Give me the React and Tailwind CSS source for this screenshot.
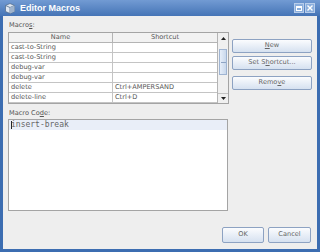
import React from "react";

const rows = [
  ["cast-to-String", ""],
  ["cast-to-String", ""],
  ["debug-var", ""],
  ["debug-var", ""],
  ["delete", "Ctrl+AMPERSAND"],
  ["delete-line", "Ctrl+D"],
];

function Btn({ children, className = "" }) {
  return (
    <div
      className={
        "flex items-center justify-center border border-[#8da2c2] rounded-[2px] bg-gradient-to-b from-[#fbfcfe] to-[#d6e1f0] text-[#666] " +
        className
      }
    >
      {children}
    </div>
  );
}

function TitleIcon() {
  return (
    <svg width="10" height="11" viewBox="0 0 10 11">
      <path d="M5 0.5 L9.5 2.5 L9.5 8.5 L5 10.5 L0.5 8.5 L0.5 2.5 Z" fill="#dfe7f2" stroke="#56708f" strokeWidth="0.8" />
      <path d="M0.5 2.5 L5 4.5 L9.5 2.5 M5 4.5 L5 10.5" fill="none" stroke="#56708f" strokeWidth="0.8" />
      <path d="M5 4.5 L9.5 2.5 L9.5 8.5 L5 10.5 Z" fill="#9fb3cc" />
    </svg>
  );
}

export default function App() {
  return (
    <div
      className="w-[320px] h-[252px] flex flex-col bg-[#3c6db1] overflow-hidden"
      style={{ fontFamily: "'DejaVu Sans', sans-serif" }}
    >
      {/* title bar */}
      <div className="h-[16px] flex items-center px-[5px] bg-gradient-to-b from-[#729bd3] to-[#4574b6]">
        <TitleIcon />
        <span
          className="ml-[5px] text-[9px] font-bold text-white leading-none"
          style={{ fontFamily: "'Liberation Sans', sans-serif" }}
        >
          Editor Macros
        </span>
        <div className="ml-auto flex gap-[1px]">
          <div className="w-[10px] h-[10px] bg-[#8aaedd] border border-[#b8cdea] flex items-center justify-center">
            <div className="w-[6px] h-[5px] border border-white border-t-2" />
          </div>
          <div className="w-[10px] h-[10px] bg-[#8aaedd] border border-[#b8cdea] flex items-center justify-center">
            <svg width="6" height="6" viewBox="0 0 6 6">
              <path d="M0.5 0.5 L5.5 5.5 M5.5 0.5 L0.5 5.5" stroke="white" strokeWidth="1.4" />
            </svg>
          </div>
        </div>
      </div>

      {/* body */}
      <div className="flex-1 mx-[3px] mb-[3px] bg-[#eeeeee] flex flex-col px-[5px] pt-[4px] text-[6.6px] text-[#555]">
        <div className="flex">
          <div className="w-[221px] flex flex-col">
            <div className="h-[10px] leading-[10px] pl-[1px]">
              Macro<span className="underline">s</span>:
            </div>
            <div className="mt-[2px] h-[72px] border border-[#a4a4a4] bg-white flex">
              <div className="flex-1 flex flex-col">
                <div className="h-[10px] flex border-b border-[#b4b4b4] bg-[#f2f2f2]">
                  <div className="w-[104px] border-r border-[#b4b4b4] text-center leading-[9px]">Name</div>
                  <div className="flex-1 text-center leading-[9px]">Shortcut</div>
                </div>
                {rows.map(([n, s], i) => (
                  <div key={i} className="h-[10px] flex border-b border-[#c4c4c4]">
                    <div className="w-[104px] border-r border-[#c4c4c4] pl-[2px] leading-[9px]">{n}</div>
                    <div className="flex-1 pl-[2px] leading-[9px]">{s}</div>
                  </div>
                ))}
              </div>
              {/* scrollbar */}
              <div className="w-[11px] border-l border-[#b4b4b4] bg-[#f0f0f0] flex flex-col">
                <div className="h-[10px] flex items-center justify-center">
                  <svg width="5" height="3" viewBox="0 0 5 3">
                    <path d="M0 3 L2.5 0 L5 3 Z" fill="#222" />
                  </svg>
                </div>
                <div className="mt-[6px] h-[26px] mx-[1px] border border-[#9fb4d2] bg-gradient-to-r from-[#e6eef9] to-[#c9d8ec] flex items-center justify-center">
                  <div className="w-[5px] h-[1px] bg-[#8ea4c4]" />
                </div>
                <div className="mt-auto h-[10px] flex items-center justify-center border-t border-[#c4c4c4]">
                  <svg width="5" height="3" viewBox="0 0 5 3">
                    <path d="M0 0 L2.5 3 L5 0 Z" fill="#222" />
                  </svg>
                </div>
              </div>
            </div>
          </div>
          <div className="ml-[3px] w-[80px] pt-[19px] flex flex-col">
            <Btn className="h-[14px]">
              <span className="underline">N</span>ew
            </Btn>
            <Btn className="h-[14px] mt-[3px]">
              Set S<span className="underline">h</span>ortcut...
            </Btn>
            <Btn className="h-[14px] mt-[6px]">
              Remo<span className="underline">v</span>e
            </Btn>
          </div>
        </div>

        <div className="mt-[4px] h-[10px] leading-[10px] pl-[1px]">
          Macro Co<span className="underline">d</span>e:
        </div>
        <div className="mt-[1px] w-[220px] h-[92px] border border-[#a4a4a4] bg-white">
          <div
            className="h-[10px] bg-[#e9eef8] flex items-center pl-[2px] text-[8px] text-[#666]"
            style={{ fontFamily: "'DejaVu Sans Mono', monospace" }}
          >
            <span className="w-[1px] h-[8px] bg-[#222] mr-[-1px]" />
            insert-break
          </div>
        </div>

        <div className="mt-auto mb-[6px] flex justify-end gap-[4px] pr-[1px]">
          <Btn className="w-[42px] h-[16px]">OK</Btn>
          <Btn className="w-[43px] h-[16px]">Cancel</Btn>
        </div>
      </div>
    </div>
  );
}
